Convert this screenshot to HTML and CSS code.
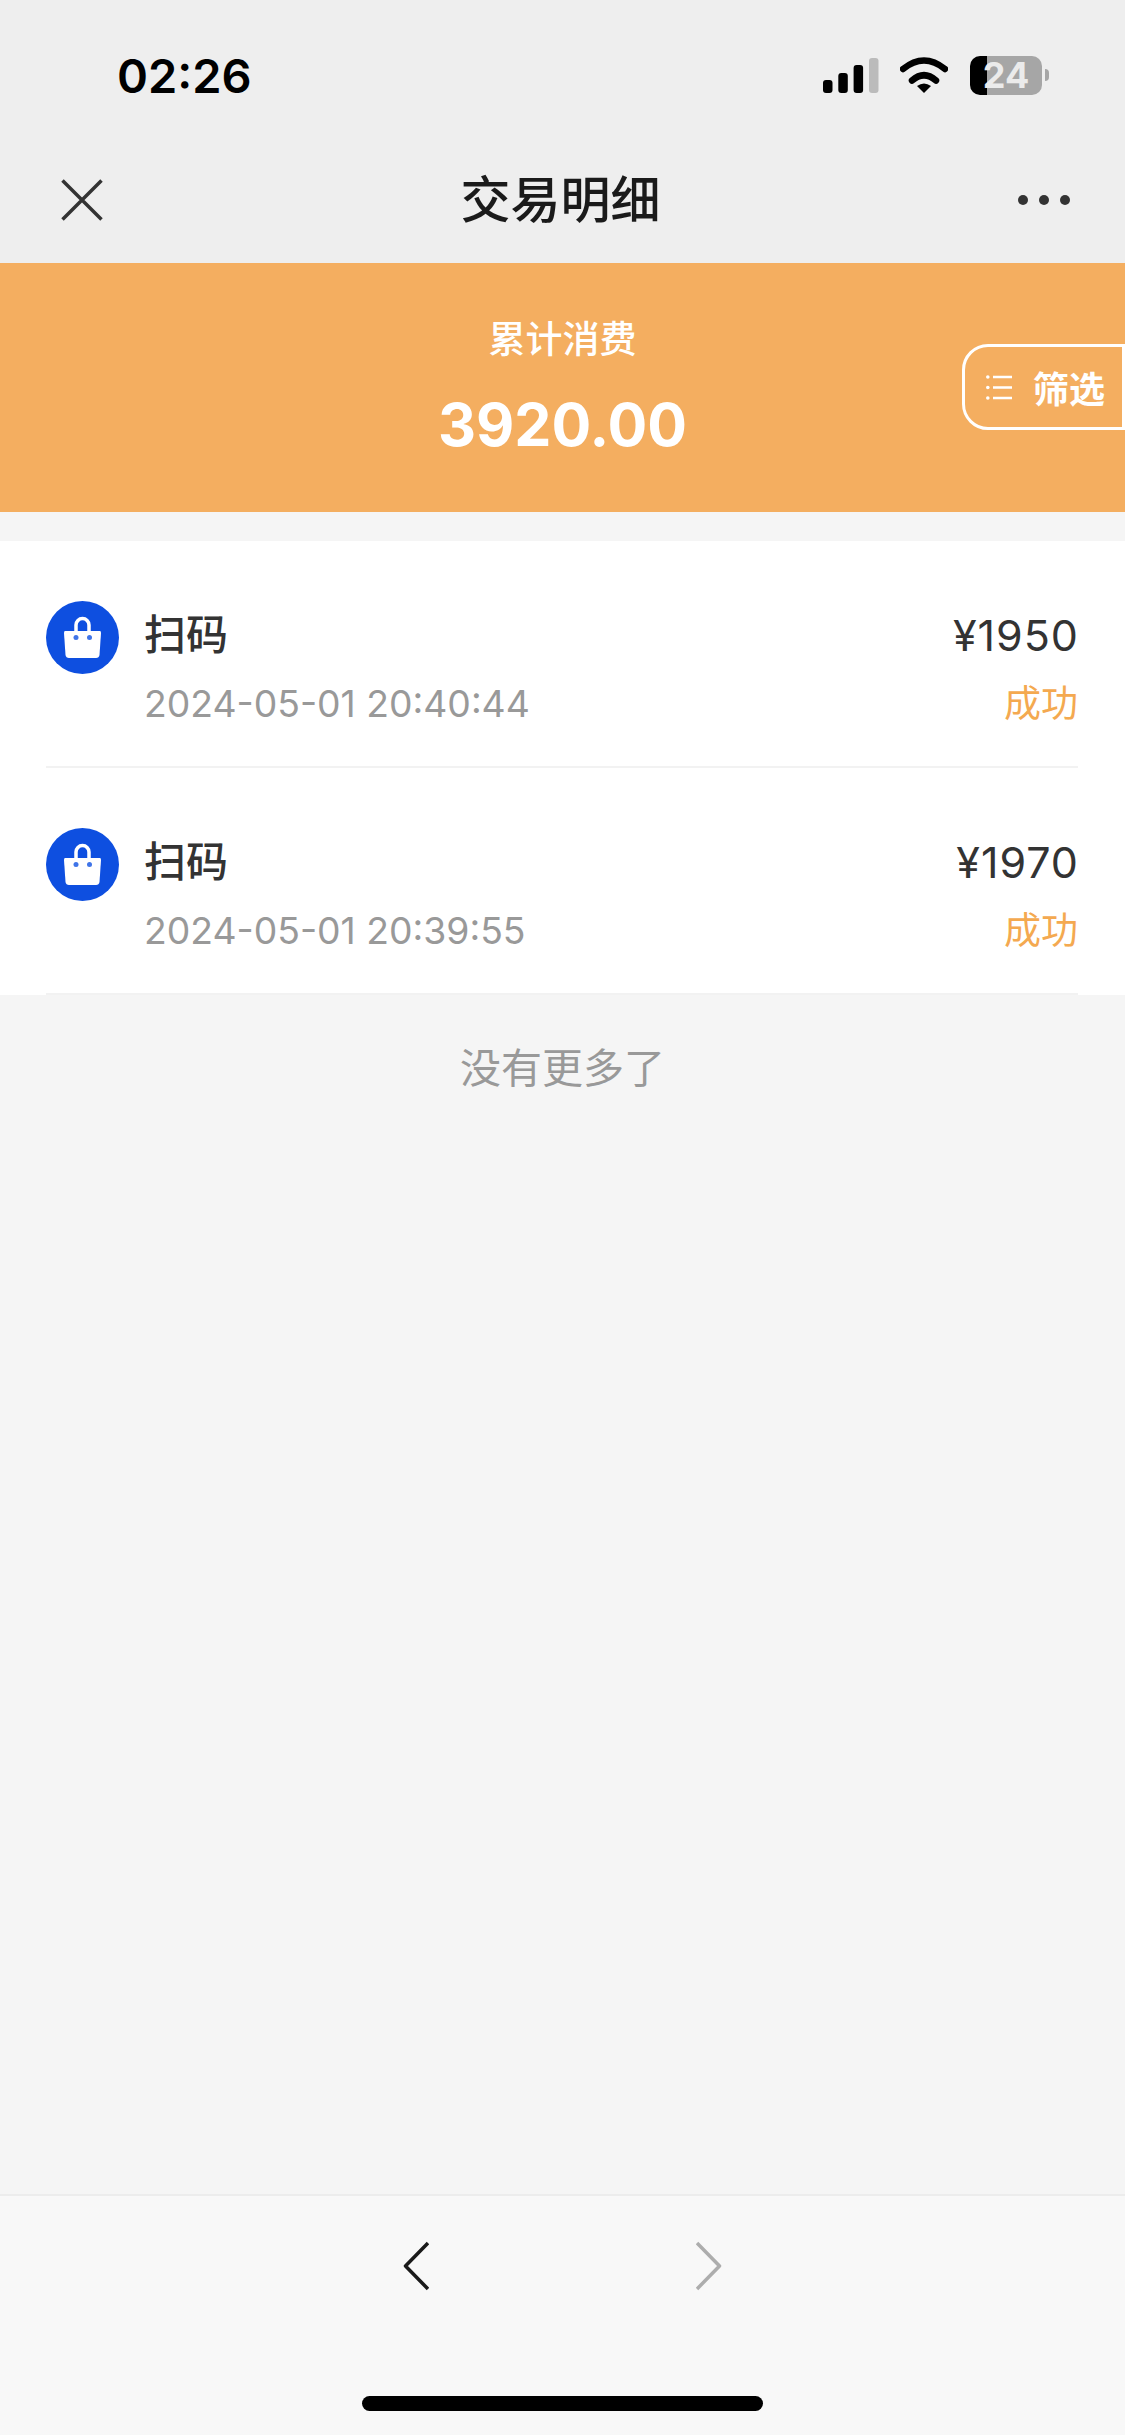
FILE: index.html
```html
<!DOCTYPE html>
<html lang="zh-CN">
<head>
    <meta charset="UTF-8">
    <meta name="viewport" content="width=device-width, initial-scale=1.0">
    <title>交易明细</title>
    <link rel="stylesheet" href="styles.css">
</head>
<body>
    <div class="page">
        <header class="topBar">
            <div class="status">
                <span class="time">02:26</span>
                <div class="statusIcons">
                    <svg class="signal" width="56" height="35" viewBox="0 0 56 35">
                        <rect x="0" y="22" width="9.5" height="13" rx="3"/>
                        <rect x="15.3" y="15" width="9.5" height="20" rx="3"/>
                        <rect x="30.6" y="7" width="9.5" height="28" rx="3"/>
                        <rect x="46" y="0" width="9.5" height="35" rx="3" fill="#bbbbbb"/>
                    </svg>
                    <svg class="wifi" width="48" height="36" viewBox="0 0 48 36">
                        <path d="M3 12 Q24 -5 45 12" fill="none" stroke="#000" stroke-width="6.5" stroke-linecap="round"/>
                        <path d="M12 23.500 Q24 13 36 23.500" fill="none" stroke="#000" stroke-width="6.5" stroke-linecap="round"/>
                        <path d="M17 29 Q24 24 31 29 L24 36 Z"/>
                    </svg>
                    <div class="battery">
                        <div class="batteryBody">24</div>
                        <div class="batteryTip"></div>
                    </div>
                </div>
            </div>
            <nav class="nav">
                <svg class="navClose" width="42" height="42" viewBox="0 0 42 42">
                    <path d="M1.500 1.500 L40.500 40.500 M40.500 1.500 L1.500 40.500" stroke="#333" stroke-width="3.500" fill="none"/>
                </svg>
                <h1 class="navTitle">交易明细</h1>
                <div class="navMore"><i></i><i></i><i></i></div>
            </nav>
        </header>

        <section class="summary">
            <div class="summaryLabel">累计消费</div>
            <div class="summaryValue">3920.00</div>
            <button class="filterBtn">
                <svg width="26" height="25" viewBox="0 0 26 25">
                    <path d="M7 2 H26 M7 12.500 H26 M7 23 H26" stroke="#fff" stroke-width="2.500"/>
                    <circle cx="1.800" cy="2" r="1.800" fill="#fff"/>
                    <circle cx="1.800" cy="12.500" r="1.800" fill="#fff"/>
                    <circle cx="1.800" cy="23" r="1.800" fill="#fff"/>
                </svg>
                <span>筛选</span>
            </button>
        </section>

        <main class="content">
            <ul class="list">
                <li class="row">
                    <svg class="bagIcon" width="73" height="73" viewBox="0 0 73 73">
                        <circle cx="36.500" cy="36.500" r="36.500" fill="#0e4fe0"/>
                        <path d="M30 31 V24 A6.500 6.500 0 0 1 43 24 V31" fill="none" stroke="#fff" stroke-width="3.500"/>
                        <path d="M19 30 H54 Q55 30 55 32 L53.500 54 Q53 57 50 57 H23 Q20 57 19.500 54 L18 32 Q18 30 19 30 Z" fill="#fff"/>
                        <circle cx="30" cy="36.500" r="2.500" fill="#3f74e8"/>
                        <circle cx="43.500" cy="36.500" r="2.500" fill="#3f74e8"/>
                    </svg>
                    <div class="rowInfo">
                        <div class="rowTitle">扫码</div>
                        <div class="rowDate">2024-05-01 20:40:44</div>
                    </div>
                    <div class="rowSide">
                        <div class="rowAmount">¥1950</div>
                        <div class="rowState">成功</div>
                    </div>
                </li>
                <li class="row">
                    <svg class="bagIcon" width="73" height="73" viewBox="0 0 73 73">
                        <circle cx="36.500" cy="36.500" r="36.500" fill="#0e4fe0"/>
                        <path d="M30 31 V24 A6.500 6.500 0 0 1 43 24 V31" fill="none" stroke="#fff" stroke-width="3.500"/>
                        <path d="M19 30 H54 Q55 30 55 32 L53.500 54 Q53 57 50 57 H23 Q20 57 19.500 54 L18 32 Q18 30 19 30 Z" fill="#fff"/>
                        <circle cx="30" cy="36.500" r="2.500" fill="#3f74e8"/>
                        <circle cx="43.500" cy="36.500" r="2.500" fill="#3f74e8"/>
                    </svg>
                    <div class="rowInfo">
                        <div class="rowTitle">扫码</div>
                        <div class="rowDate">2024-05-01 20:39:55</div>
                    </div>
                    <div class="rowSide">
                        <div class="rowAmount">¥1970</div>
                        <div class="rowState">成功</div>
                    </div>
                </li>
            </ul>
            <p class="noMore">没有更多了</p>
        </main>

        <footer class="bottomBar">
            <div class="arrows">
                <svg width="26" height="50" viewBox="0 0 26 50">
                    <path d="M25 2 L2.500 25 L25 48" fill="none" stroke="#1a1a1a" stroke-width="3.500" stroke-linejoin="round"/>
                </svg>
                <svg width="26" height="50" viewBox="0 0 26 50">
                    <path d="M1 2 L23.500 25 L1 48" fill="none" stroke="#adadad" stroke-width="3.500" stroke-linejoin="round"/>
                </svg>
            </div>
            <div class="homeBar"></div>
        </footer>
    </div>
</body>
</html>
```

FILE: styles.css
```css
* {
    box-sizing: border-box;
}
body {
    margin: 0;
    font-family: Inter, "Noto Sans CJK SC", sans-serif;
    background: #f5f5f5;
}
.page {
    width: 1125px;
    height: 2435px;
    display: flex;
    flex-direction: column;
    overflow: hidden;
}

/* top */
.topBar {
    height: 263px;
    background: #eeeeee;
}
.status {
    height: 136px;
    padding: 14px 76px 0 117px;
    display: flex;
    align-items: center;
    justify-content: space-between;
}
.time {
    font-size: 47px;
    font-weight: 600;
    color: #000;
}
.statusIcons {
    display: flex;
    align-items: center;
}
.signal {
    margin-right: 21px;
}
.wifi {
    margin-right: 22px;
}
.battery {
    display: flex;
    align-items: center;
}
.batteryBody {
    width: 72px;
    height: 39px;
    border-radius: 10px;
    background: linear-gradient(90deg, #000 17px, #a6a6a6 17px);
    color: #ebebeb;
    font-size: 36px;
    font-weight: 700;
    line-height: 39px;
    text-align: center;
}
.batteryTip {
    width: 4px;
    height: 12px;
    margin-left: 3px;
    border-radius: 0 6px 6px 0;
    background: #a6a6a6;
}
.nav {
    height: 127px;
    padding: 0 55px 0 61px;
    display: flex;
    align-items: center;
    justify-content: space-between;
}
.navClose {
    width: 42px;
}
.navTitle {
    margin: 0;
    font-size: 50px;
    font-weight: 500;
    color: #1a1a1a;
    line-height: 60px;
}
.navMore {
    display: flex;
    gap: 11px;
    width: 52px;
}
.navMore i {
    display: block;
    flex: none;
    width: 10px;
    height: 10px;
    border-radius: 50%;
    background: #333;
}

/* orange block */
.summary {
    position: relative;
    height: 249px;
    background: #f4ae60;
    color: #fff;
    display: flex;
    flex-direction: column;
    align-items: center;
}
.summaryLabel {
    margin-top: 52px;
    font-size: 37px;
    font-weight: 500;
    line-height: 50px;
}
.summaryValue {
    margin-top: 22px;
    font-size: 59px;
    font-weight: 700;
    line-height: 76px;
}
.filterBtn {
    position: absolute;
    top: 81px;
    right: 0;
    width: 163px;
    height: 86px;
    padding: 0 0 0 21px;
    display: flex;
    align-items: center;
    gap: 21px;
    background: transparent;
    border: 3px solid #fff;
    border-radius: 26px 0 0 26px;
    color: #fff;
    font-family: inherit;
    font-size: 36px;
    font-weight: 700;
}

/* list */
.content {
    flex: 1;
    padding-top: 29px;
}
.list {
    margin: 0;
    padding: 0;
    list-style: none;
    background: #fff;
}
.row {
    height: 227px;
    margin: 0 47px 0 46px;
    padding-top: 60px;
    display: flex;
    align-items: flex-start;
    border-bottom: 2px solid #f2f2f2;
}
.bagIcon {
    flex: none;
    margin-right: 25px;
    filter: blur(0.6px);
}
.rowInfo {
    flex: 1;
}
.rowTitle,
.rowAmount {
    margin-top: 6px;
    line-height: 56px;
    color: #333;
}
.rowTitle {
    font-size: 42px;
    font-weight: 500;
}
.rowAmount {
    margin-right: -1px;
    font-size: 43px;
    letter-spacing: 1px;
}
.rowDate,
.rowState {
    margin-top: 13px;
    line-height: 56px;
}
.rowDate {
    font-size: 37.3px;
    color: #999;
}
.rowSide {
    text-align: right;
}
.rowState {
    font-size: 37px;
    color: #f4a950;
}
.noMore {
    margin: 43px 0 0;
    text-align: center;
    font-size: 41px;
    line-height: 60px;
    color: #999;
}

/* bottom */
.bottomBar {
    height: 241px;
    background: #f8f8f8;
    border-top: 2px solid #ececec;
    display: flex;
    flex-direction: column;
    align-items: center;
}
.arrows {
    margin-top: 45px;
    width: 319px;
    display: flex;
    justify-content: space-between;
}
.homeBar {
    margin-top: 105px;
    width: 401px;
    height: 15px;
    border-radius: 8px;
    background: #000;
}
```
